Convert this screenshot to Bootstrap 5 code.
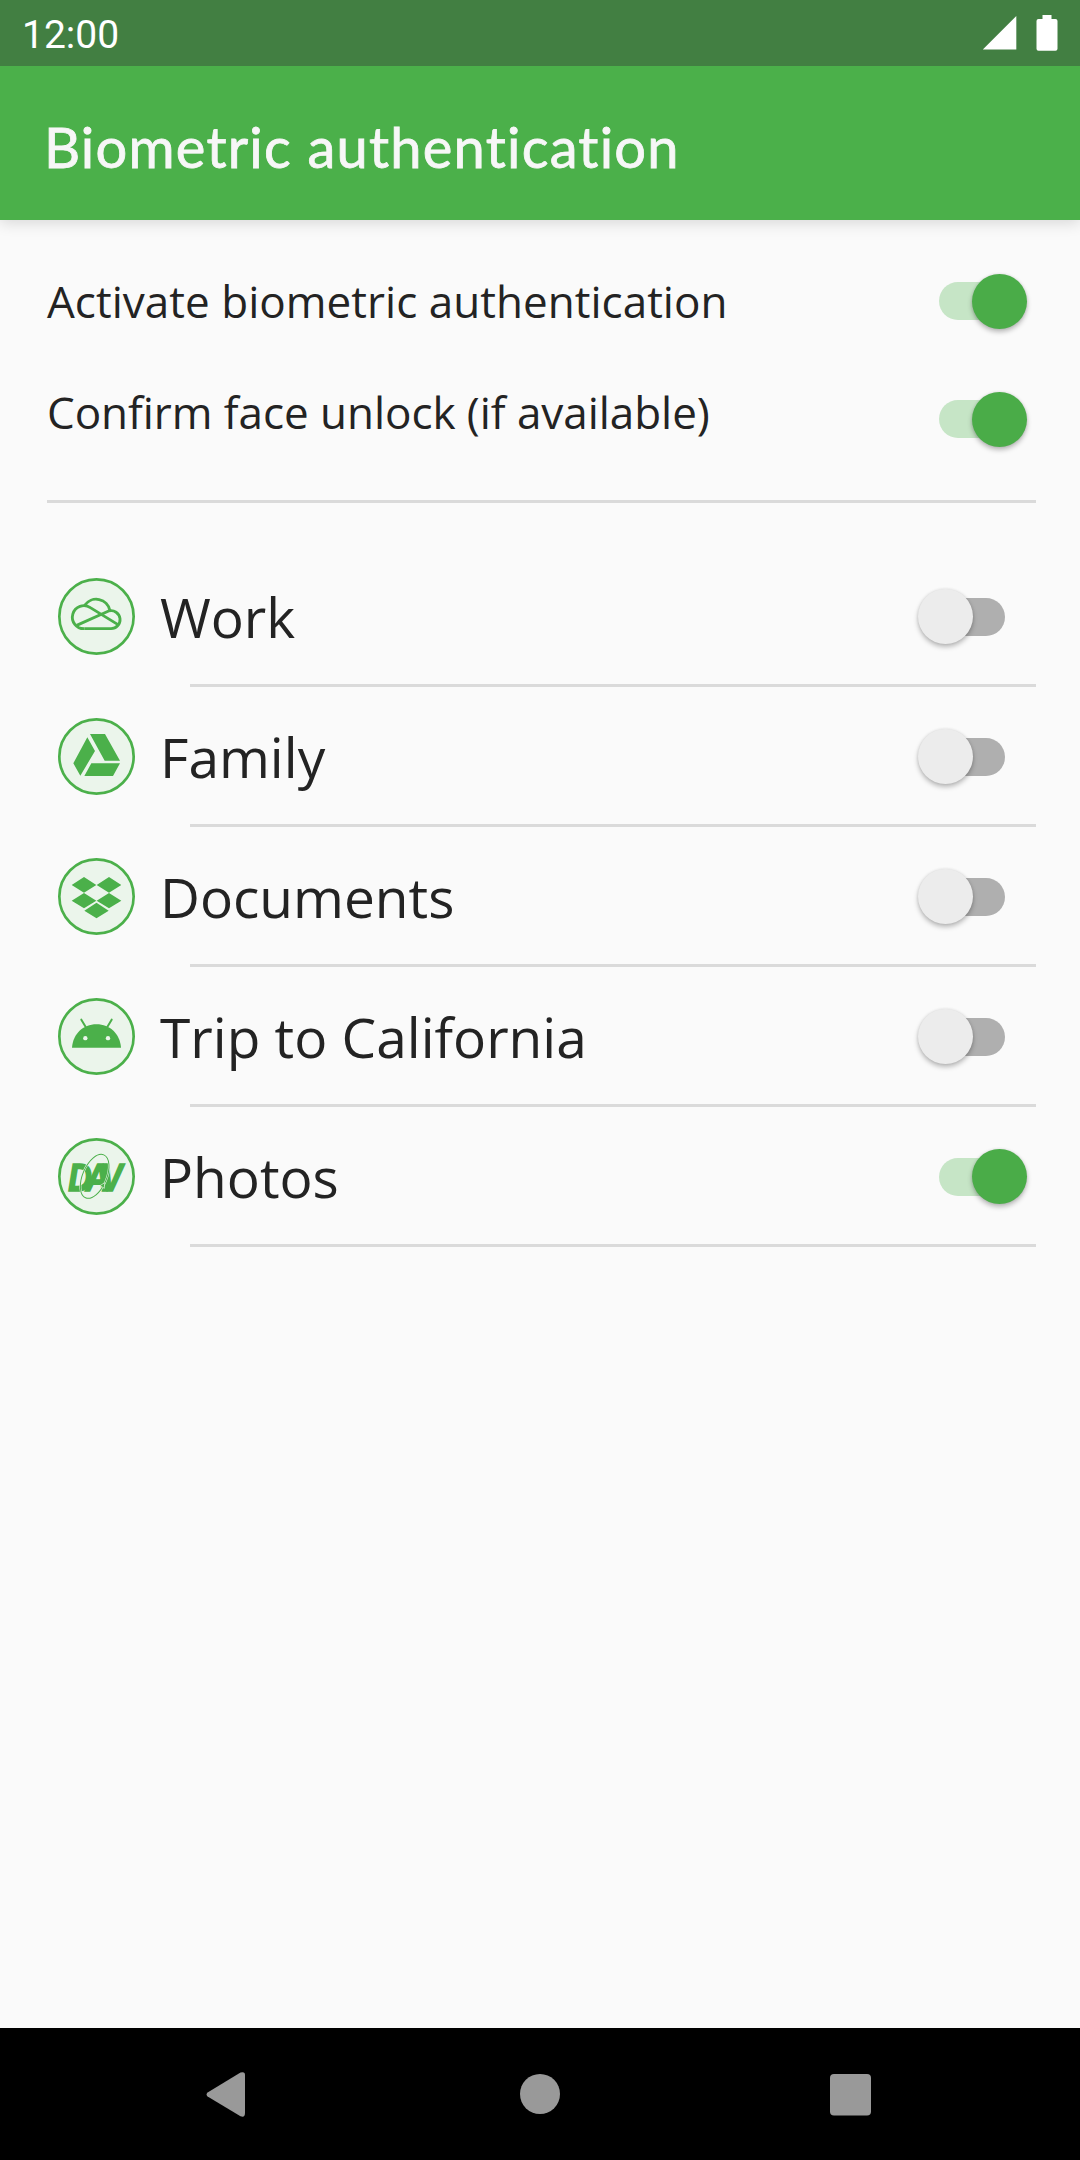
<!DOCTYPE html>
<html lang="en">
<head>
<meta charset="utf-8">
<meta name="viewport" content="width=device-width, initial-scale=1">
<title>Biometric authentication</title>
<link href="https://cdn.jsdelivr.net/npm/bootstrap@5.3.0/dist/css/bootstrap.min.css" rel="stylesheet">
<style>
  :root { --brand: #4bb04a; --ink: #232323; --line: #dadada; }
  body { background: #fafafa; color: var(--ink); font-family: "Open Sans", "Noto Sans", sans-serif; }
  .screen { height: 2160px; overflow: hidden; }
  .status-bar { height: 66px; background: #427f42; padding: 0 22px 0 22px; z-index: 2; }
  .clock { font: 400 39px/66px Roboto, sans-serif; padding-top: 3px; }
  .app-bar { height: 154px; background: var(--brand); padding: 7px 44px 0; box-shadow: 0 3px 14px rgba(0,0,0,.14); }
  .app-title { font: 400 56px/1 Lato, sans-serif; color: #f7f7f7; letter-spacing: 1.230px; -webkit-text-stroke: .8px #f7f7f7; }
  .settings { height: 283px; margin: 0 44px 0 47px; border-bottom: 3px solid var(--line); font-size: 44px; line-height: 60px; }
  .setting-first { height: 162px; }
  .setting-first .setting-label { letter-spacing: .03px; }
  .setting-second { height: 74px; }
  .setting-second .setting-label { padding-bottom: 15px; letter-spacing: -.05px; }
  .toggle-end { margin-right: 8px; }
  .accounts { padding: 44px 44px 0 58px; }
  .account { height: 140px; }
  .account-icon { width: 77px; height: 77px; margin-top: 1px; }
  .account-body { height: 137px; padding-top: 2px; margin-left: 25px; font-size: 55px; line-height: 74px; }
  .account-line { height: 3px; margin-left: 132px; background: var(--line); }
  .toggle { width: 111px; height: 55px; padding: 0 22px; }
  .toggle-track { width: 66px; height: 38px; border-radius: 19px; background: #afafaf; }
  .toggle-thumb { width: 55px; height: 55px; left: .5px; top: 0; border-radius: 50%; background: #ececec; box-shadow: 0 3px 5px rgba(0,0,0,.26), 0 0 3px rgba(0,0,0,.1); }
  .toggle-on .toggle-track { background: #c6e5c6; }
  .toggle-on .toggle-thumb { left: 54.5px; background: #4aac48; }
  .nav-keys { height: 132px; padding: 0 206px; }
</style>
</head>
<body>
<div class="screen d-flex flex-column">
  <header class="status-bar position-relative d-flex align-items-center justify-content-between text-white">
    <span class="clock">12:00</span>
    <svg width="76" height="36" viewBox="0 0 76 36" fill="#fff" aria-label="Signal and battery">
      <path d="M34.300 1v33.500H.8z"/>
      <path d="M60.500 0h9v4h4a2 2 0 0 1 2 2v27.800a2 2 0 0 1-2 2h-17a2 2 0 0 1-2-2V6a2 2 0 0 1 2-2h4z"/>
    </svg>
  </header>
  <nav class="app-bar d-flex align-items-center">
    <h1 class="app-title m-0">Biometric authentication</h1>
  </nav>

  <main class="flex-grow-1">
    <section class="settings">
      <div class="setting-first d-flex align-items-center justify-content-between">
        <span class="setting-label">Activate biometric authentication</span>
        <div class="toggle toggle-on toggle-end position-relative d-flex align-items-center" role="switch" aria-checked="true"><div class="toggle-track"></div><div class="toggle-thumb position-absolute"></div></div>
      </div>
      <div class="setting-second d-flex align-items-center justify-content-between">
        <span class="setting-label">Confirm face unlock (if available)</span>
        <div class="toggle toggle-on toggle-end position-relative d-flex align-items-center" role="switch" aria-checked="true"><div class="toggle-track"></div><div class="toggle-thumb position-absolute"></div></div>
      </div>
    </section>

    <section class="accounts">
      <div class="account">
        <div class="d-flex align-items-center">
          <svg class="account-icon flex-shrink-0" viewBox="0 0 231 231">
            <circle cx="115.500" cy="115.500" r="111.500" fill="#ebf5eb" stroke="#4bb04a" stroke-width="8"/>
            <g fill="none" stroke="#4bb04a" stroke-width="8.500" stroke-linejoin="round">
              <path d="M79 152H158A27 27 0 1 0 152 99L56 142"/>
              <path d="M79 152A34.500 34.500 0 1 1 97 89L180 140"/>
              <path d="M80 82A42 42 0 0 1 156 98"/>
            </g>
          </svg>
          <div class="account-body d-flex align-items-center justify-content-between flex-grow-1">
            <span>Work</span>
            <div class="toggle toggle-end position-relative d-flex align-items-center" role="switch" aria-checked="false"><div class="toggle-track"></div><div class="toggle-thumb position-absolute"></div></div>
          </div>
        </div>
        <div class="account-line"></div>
      </div>
      <div class="account">
        <div class="d-flex align-items-center">
          <svg class="account-icon flex-shrink-0" viewBox="0 0 231 231">
            <circle cx="115.500" cy="115.500" r="111.500" fill="#ebf5eb" stroke="#4bb04a" stroke-width="8"/>
            <path fill="#4bb04a" d="M96 48H141L186 128H140zM88 58L111 99 67 173 46 136zM100 136H186L165 174H79z"/>
          </svg>
          <div class="account-body d-flex align-items-center justify-content-between flex-grow-1">
            <span>Family</span>
            <div class="toggle toggle-end position-relative d-flex align-items-center" role="switch" aria-checked="false"><div class="toggle-track"></div><div class="toggle-thumb position-absolute"></div></div>
          </div>
        </div>
        <div class="account-line"></div>
      </div>
      <div class="account">
        <div class="d-flex align-items-center">
          <svg class="account-icon flex-shrink-0" viewBox="0 0 231 231">
            <circle cx="115.500" cy="115.500" r="111.500" fill="#ebf5eb" stroke="#4bb04a" stroke-width="8"/>
            <path fill="#4bb04a" d="M41 81l37-24 37 24-37 23zM116 81l37-24 37 24-37 23zM41 128l37-23 37 23-37 23zM116 128l37-23 37 23-37 23zM79 158l36.500-23.500 36.500 23.500-36.500 23z"/>
          </svg>
          <div class="account-body d-flex align-items-center justify-content-between flex-grow-1">
            <span>Documents</span>
            <div class="toggle toggle-end position-relative d-flex align-items-center" role="switch" aria-checked="false"><div class="toggle-track"></div><div class="toggle-thumb position-absolute"></div></div>
          </div>
        </div>
        <div class="account-line"></div>
      </div>
      <div class="account">
        <div class="d-flex align-items-center">
          <svg class="account-icon flex-shrink-0" viewBox="0 0 231 231">
            <circle cx="115.500" cy="115.500" r="111.500" fill="#ebf5eb" stroke="#4bb04a" stroke-width="8"/>
            <path fill="#4bb04a" d="M42 149C45 108 75 79 115.500 79S186 108 189 149z"/>
            <path stroke="#4bb04a" stroke-width="6" stroke-linecap="round" d="M70 65l15 25M161 65l-15 25"/>
            <circle cx="82" cy="120.500" r="6.500" fill="#ebf5eb"/><circle cx="150" cy="120.500" r="6.500" fill="#ebf5eb"/>
          </svg>
          <div class="account-body d-flex align-items-center justify-content-between flex-grow-1">
            <span>Trip to California</span>
            <div class="toggle toggle-end position-relative d-flex align-items-center" role="switch" aria-checked="false"><div class="toggle-track"></div><div class="toggle-thumb position-absolute"></div></div>
          </div>
        </div>
        <div class="account-line"></div>
      </div>
      <div class="account">
        <div class="d-flex align-items-center">
          <svg class="account-icon flex-shrink-0" viewBox="0 0 231 231">
            <circle cx="115.500" cy="115.500" r="111.500" fill="#ebf5eb" stroke="#4bb04a" stroke-width="8"/>
            <text transform="translate(31 158) scale(.82 1)" letter-spacing="-22" fill="#4bb04a" stroke="#4bb04a" stroke-width="5" font-family="Liberation Sans, sans-serif" font-weight="700" font-style="italic" font-size="119">DAV</text>
            <g fill="none" transform="rotate(23 110 115)">
              <ellipse cx="110" cy="115" rx="36" ry="70" stroke="#ebf5eb" stroke-width="6"/>
              <ellipse cx="110" cy="115" rx="36" ry="70" stroke="#4bb04a" stroke-width="3"/>
            </g>
            <path fill="#4bb04a" stroke="#ebf5eb" stroke-width="2" d="M126 143l14-9-1 17z"/>
          </svg>
          <div class="account-body d-flex align-items-center justify-content-between flex-grow-1">
            <span>Photos</span>
            <div class="toggle toggle-on toggle-end position-relative d-flex align-items-center" role="switch" aria-checked="true"><div class="toggle-track"></div><div class="toggle-thumb position-absolute"></div></div>
          </div>
        </div>
        <div class="account-line"></div>
      </div>
    </section>
  </main>

  <footer class="nav-keys bg-black d-flex align-items-center justify-content-between">
    <svg width="44" height="48" viewBox="0 0 44 48" fill="#999"><path d="M1.600 22.500L34.500 2.600Q39 1 39 5V43Q39 48 34.500 46.200L1.600 26.500Q-.500 24.500 1.600 22.500z"/></svg>
    <svg width="44" height="44" viewBox="0 0 44 44" fill="#999"><circle cx="22" cy="22" r="20"/></svg>
    <svg width="44" height="44" viewBox="0 0 44 44" fill="#999"><rect x="0" y="2" width="41" height="41.500" rx="4"/></svg>
  </footer>
</div>
<script src="https://cdn.jsdelivr.net/npm/bootstrap@5.3.0/dist/js/bootstrap.bundle.min.js"></script>
</body>
</html>
